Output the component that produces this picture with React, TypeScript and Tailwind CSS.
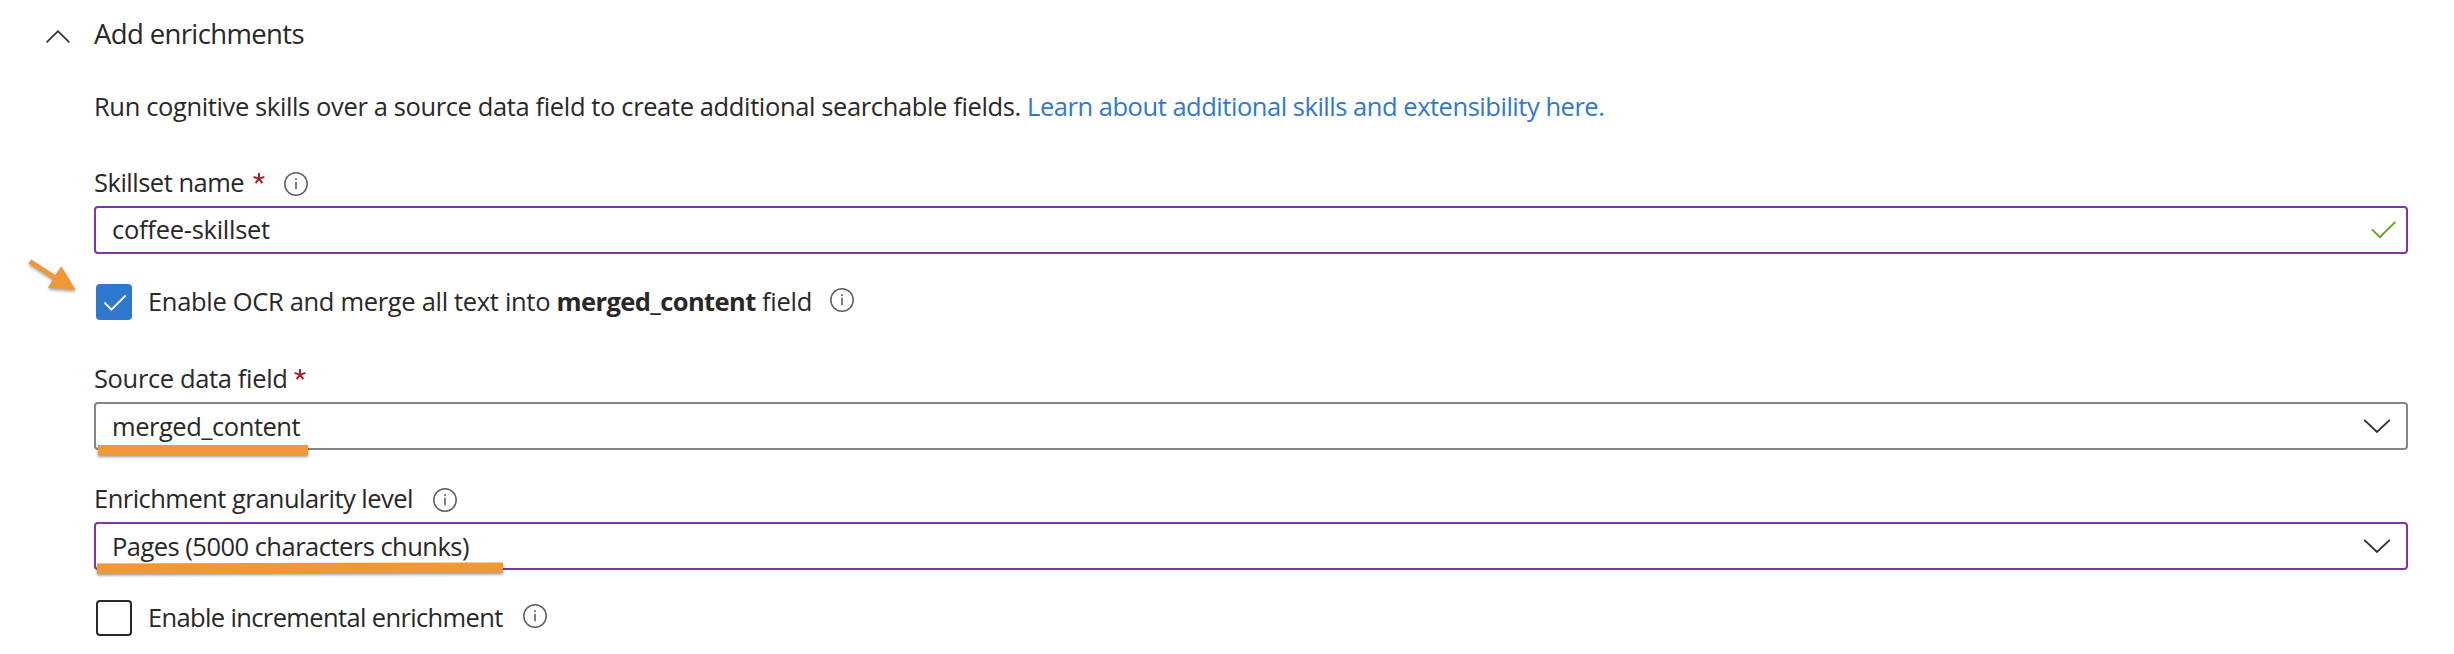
import type { ReactNode } from 'react';

function InfoIcon({ className = '' }: { className?: string }) {
  return (
    <svg className={`size-6 shrink-0 ${className}`} viewBox="0 0 24 24" fill="none" stroke="#605e5c">
      <circle cx="12" cy="12" r="11.2" strokeWidth="1.5" />
      <path d="M12 9.8V17.3" strokeWidth="1.6" />
      <path d="M12 6.2V8" strokeWidth="1.7" />
    </svg>
  );
}

function Asterisk({ className = '' }: { className?: string }) {
  return (
    <svg className={`h-[11px] w-3 shrink-0 ${className}`} viewBox="0 0 12 11" fill="none" stroke="#a4262c" strokeWidth="2">
      <path d="M6 0V5.6M0.6 4L6 5.6M11.4 4L6 5.6M2.6 10.2L6 5.6M9.4 10.2L6 5.6" />
    </svg>
  );
}

function ChevronDown() {
  return (
    <svg className="h-[14px] w-7 shrink-0" viewBox="0 0 28 14" fill="none" stroke="#323130" strokeWidth="1.8">
      <path d="M1.2 0.8L14 13L26.8 0.8" />
    </svg>
  );
}

function Label({ children, className = '' }: { children: ReactNode; className?: string }) {
  return <div className={`flex h-9 items-center leading-9 ${className}`}>{children}</div>;
}

function Field({ children, className }: { children: ReactNode; className: string }) {
  return (
    <div className={`relative mt-1.5 flex h-12 items-center justify-between rounded-[4px] border-2 pl-4 ${className}`}>
      {children}
    </div>
  );
}

export default function App() {
  return (
    <main className="h-[654px] w-full overflow-hidden bg-white pr-[46px] font-['Open_Sans','Noto_Sans',sans-serif] text-[25.5px] whitespace-nowrap text-[#292827]">
      <header className="flex h-[66px] items-center pl-[46px] text-[27.5px]">
        <svg className="mt-1.5 mr-6 h-[13px] w-6 shrink-0" viewBox="0 0 24 13" fill="none" stroke="#323130" strokeWidth="1.7">
          <path d="M0.6 12.4L12 1.2L23.4 12.4" />
        </svg>
        <h1 className="pt-0.5 tracking-[-0.63px]">Add enrichments</h1>
      </header>

      <div className="pl-[94px]">
        <p className="mt-[22px] h-9 leading-9 tracking-[-0.374px]">
          Run cognitive skills over a source data field to create additional searchable fields.{' '}
          <a className="tracking-[-0.47px]">
            <span className="text-[#2f78cf]">Learn about additional skills and extensibility here.</span>
          </a>
        </p>

        <Label className="mt-10">
          <span className="tracking-[-0.5px]">Skillset name</span>
          <Asterisk className="mb-2 ml-[9px]" />
          <InfoIcon className="mt-1 ml-[19px]" />
        </Label>
        <Field className="border-[#8035a3]">
          <span className="-mt-0.5 tracking-[-0.27px]">coffee-skillset</span>
          <svg className="mr-[9px] h-[18px] w-[26px]" viewBox="0 0 26 18" fill="none" stroke="#5fa326" strokeWidth="1.9">
            <path d="M1 8.4L8.8 16.2L24.4 0.9" />
          </svg>
        </Field>

        <div className="relative mt-[30px] flex h-9 items-center pl-0.5">
          <svg className="absolute top-[-30px] left-[-70px] h-10 w-14 overflow-visible" viewBox="24 254 56 40" fill="#f19736">
            <g className="drop-shadow-[0_2px_1.5px_rgba(0,0,0,0.35)]">
              <path d="M31 259.3L55.3 275L61.3 266.3L75.7 289.9L48 287.8L53 279L28.6 263.6Z" />
            </g>
          </svg>
          <span className="flex size-9 shrink-0 items-center justify-center rounded-[4px] bg-[#2f78cf]">
            <svg className="size-9" viewBox="0 0 36 36" fill="none" stroke="#fff" strokeWidth="1.8">
              <path d="M8.4 18.5L15.4 25.6L29.6 11.5" />
            </svg>
          </span>
          <span className="-mt-0.5 ml-4 whitespace-pre">
            <span className="tracking-[-0.32px]">Enable OCR and merge all text into </span>
            <b className="font-bold tracking-[-0.58px]">merged_content</b>
            <span className="tracking-[-0.3px]"> field</span>
          </span>
          <InfoIcon className="mb-1 ml-[18px]" />
        </div>

        <Label className="mt-10">
          <span className="tracking-[-0.36px]">Source data field</span>
          <Asterisk className="mb-2 ml-[7px]" />
        </Label>
        <Field className="border-[#868686] pr-[15px]">
          <span className="tracking-[-0.46px]">merged_content</span>
          <ChevronDown />
          <i className="absolute top-[41px] left-0.5 h-2.5 w-[210px] bg-[#f19736] shadow-[0_2px_3px_rgba(0,0,0,0.4)]" />
        </Field>

        <Label className="mt-[30px]">
          <span className="tracking-[-0.53px]">Enrichment granularity level</span>
          <InfoIcon className="mt-1 ml-5" />
        </Label>
        <Field className="border-[#8035a3] pr-[15px]">
          <span className="tracking-[-0.52px]">Pages (5000 characters chunks)</span>
          <ChevronDown />
          <i className="absolute top-[38.5px] left-px h-2.5 w-[406px] rotate-[-0.12deg] bg-[#f19736] shadow-[0_2px_3px_rgba(0,0,0,0.4)]" />
        </Field>

        <div className="mt-[30px] flex h-9 items-center pl-0.5">
          <span className="size-9 shrink-0 rounded-[4px] border-2 border-[#292827]" />
          <span className="-mt-0.5 ml-4 tracking-[-0.64px]">Enable incremental enrichment</span>
          <InfoIcon className="mb-1 ml-5" />
        </div>
      </div>
    </main>
  );
}
